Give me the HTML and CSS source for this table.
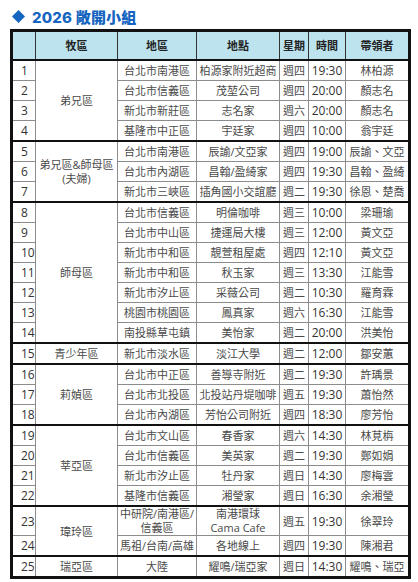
FILE: index.html
```html
<!DOCTYPE html>
<html lang="zh-Hant">
<head>
<meta charset="utf-8">
<link rel="stylesheet" href="styles.css">
</head>
<body>
<div class="title">
  <svg class="diamond" width="13" height="13" viewBox="0 0 13 13"><polygon points="6.5,0 13,6.5 6.5,13 0,6.5" fill="#1565c0"/></svg>
  <span>2026 敞開小組</span>
</div>
<table class="groups">
  <colgroup>
    <col class="c-no"><col class="c-area"><col class="c-dist"><col class="c-place"><col class="c-day"><col class="c-time"><col class="c-lead">
  </colgroup>
  <thead>
    <tr class="head"><th></th><th>牧區</th><th>地區</th><th>地點</th><th>星期</th><th>時間</th><th>帶領者</th></tr>
  </thead>
  <tbody>
    <tr><td class="no">1</td><td rowspan="4">弟兄區</td><td>台北市南港區</td><td>柏源家附近超商</td><td>週四</td><td class="tm">19:30</td><td>林柏源</td></tr>
    <tr><td class="no">2</td><td>台北市信義區</td><td>茂堃公司</td><td>週四</td><td class="tm">20:00</td><td>顏志名</td></tr>
    <tr><td class="no">3</td><td>新北市新莊區</td><td>志名家</td><td>週六</td><td class="tm">20:00</td><td>顏志名</td></tr>
    <tr><td class="no">4</td><td>基隆市中正區</td><td>宇廷家</td><td>週四</td><td class="tm">10:00</td><td>翁宇廷</td></tr>

    <tr class="grp"><td class="no">5</td><td rowspan="3" class="two">弟兄區&amp;師母區<br>(夫婦)</td><td>台北市南港區</td><td>辰諭/文亞家</td><td>週四</td><td class="tm">19:00</td><td>辰諭、文亞</td></tr>
    <tr><td class="no">6</td><td>台北市內湖區</td><td>昌翰/盈綺家</td><td>週四</td><td class="tm">19:30</td><td>昌翰、盈綺</td></tr>
    <tr><td class="no">7</td><td>新北市三峽區</td><td>插角國小交誼廳</td><td>週二</td><td class="tm">19:30</td><td>徐恩、楚喬</td></tr>

    <tr class="grp"><td class="no">8</td><td rowspan="7">師母區</td><td>台北市信義區</td><td>明倫咖啡</td><td>週三</td><td class="tm">10:00</td><td>梁珊瑜</td></tr>
    <tr><td class="no">9</td><td>台北市中山區</td><td>捷運局大樓</td><td>週三</td><td class="tm">12:00</td><td>黃文亞</td></tr>
    <tr><td class="no">10</td><td>新北市中和區</td><td>靚萱租屋處</td><td>週四</td><td class="tm">12:10</td><td>黃文亞</td></tr>
    <tr><td class="no">11</td><td>新北市中和區</td><td>秋玉家</td><td>週三</td><td class="tm">13:30</td><td>江能雪</td></tr>
    <tr><td class="no">12</td><td>新北市汐止區</td><td>采薇公司</td><td>週二</td><td class="tm">10:30</td><td>羅育霖</td></tr>
    <tr><td class="no">13</td><td>桃園市桃園區</td><td>鳳真家</td><td>週六</td><td class="tm">16:30</td><td>江能雪</td></tr>
    <tr><td class="no">14</td><td>南投縣草屯鎮</td><td>美怡家</td><td>週二</td><td class="tm">20:00</td><td>洪美怡</td></tr>

    <tr class="grp"><td class="no">15</td><td>青少年區</td><td>新北市淡水區</td><td>淡江大學</td><td>週二</td><td class="tm">12:00</td><td>鄒安蕙</td></tr>

    <tr class="grp"><td class="no">16</td><td rowspan="3">莉媜區</td><td>台北市中正區</td><td>善導寺附近</td><td>週二</td><td class="tm">19:30</td><td>許瑀景</td></tr>
    <tr><td class="no">17</td><td>台北市北投區</td><td>北投站丹堤咖啡</td><td>週五</td><td class="tm">19:30</td><td>蕭怡然</td></tr>
    <tr><td class="no">18</td><td>台北市內湖區</td><td>芳怡公司附近</td><td>週四</td><td class="tm">18:30</td><td>廖芳怡</td></tr>

    <tr class="grp"><td class="no">19</td><td rowspan="4">莘亞區</td><td>台北市文山區</td><td>春香家</td><td>週六</td><td class="tm">14:30</td><td>林莧栴</td></tr>
    <tr><td class="no">20</td><td>台北市信義區</td><td>美英家</td><td>週二</td><td class="tm">19:30</td><td>鄭如娟</td></tr>
    <tr><td class="no">21</td><td>新北市汐止區</td><td>牡丹家</td><td>週日</td><td class="tm">14:30</td><td>廖梅雲</td></tr>
    <tr><td class="no">22</td><td>基隆市信義區</td><td>湘瑩家</td><td>週日</td><td class="tm">16:30</td><td>余湘瑩</td></tr>

    <tr class="grp tall"><td class="no">23</td><td rowspan="2">瑋玲區</td><td class="two">中研院/南港區/<br>信義區</td><td class="two">南港環球<br>Cama Cafe</td><td>週五</td><td class="tm">19:30</td><td>徐翠玲</td></tr>
    <tr><td class="no">24</td><td>馬祖/台南/高雄</td><td>各地線上</td><td>週四</td><td class="tm">19:30</td><td>陳湘君</td></tr>

    <tr class="grp last"><td class="no">25</td><td>瑞亞區</td><td>大陸</td><td>耀鳴/瑞亞家</td><td>週日</td><td class="tm">14:30</td><td>耀鳴、瑞亞</td></tr>
  </tbody>
</table>
</body>
</html>
```

FILE: styles.css
```css
html, body {
  margin: 0;
  padding: 0;
  background: #ffffff;
}

body {
  font-family: "Open Sans", "Noto Sans CJK TC", sans-serif;
  color: #4a4a4a;
}

.title {
  display: flex;
  align-items: center;
  gap: 7px;
  height: 29px;
  padding-left: 12px;
  box-sizing: border-box;
  padding-top: 3px;
  color: #1565c0;
  font-family: "Inter", "Noto Sans CJK TC", sans-serif;
  font-weight: 800;
  font-size: 15px;
  letter-spacing: 0.2px;
}

.diamond {
  display: block;
}

.groups {
  margin-left: 10px;
  width: 398px;
  table-layout: fixed;
  border-collapse: collapse;
  border: 3px solid #111;
  font-size: 11px;
}

.c-no { width: 24px; }
.c-area { width: 82px; }
.c-dist { width: 79px; }
.c-place { width: 83px; }
.c-day { width: 29px; }
.c-time { width: 37px; }
.c-lead { width: 64px; }

.groups th,
.groups td {
  border: 1px solid #8c8c8c;
  padding: 0;
  text-align: center;
  vertical-align: middle;
  white-space: nowrap;
  overflow: hidden;
  line-height: 15px;
}

.groups th {
  background: #bde3ef;
  color: #222;
  font-weight: bold;
  font-size: 11px;
  height: 27px;
  border-color: #333;
  border-bottom: 2px solid #111;
}

.groups td {
  height: 19px;
}

.groups td.no {
  text-align: left;
  padding-left: 8px;
  color: #333;
  font-size: 12px;
  border-left: 3px solid #111;
}

.groups td.tm {
  color: #333;
  font-size: 12px;
}

.groups tr.grp td {
  border-top: 2px solid #111;
}

.groups tr.tall td {
  height: 28px;
}

.groups td.two {
  line-height: 14px;
  white-space: normal;
}

.groups tr.last td {
  height: 19px;
}
```
